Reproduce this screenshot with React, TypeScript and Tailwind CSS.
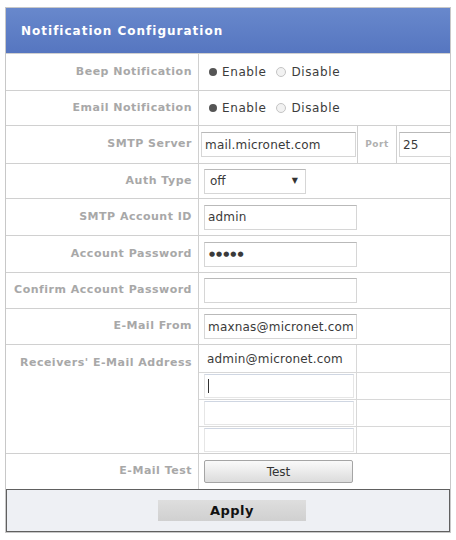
import type { ReactNode } from 'react'

const labelFont = { fontFamily: '"DejaVu Sans", Verdana, sans-serif' }

const labelCls =
  'flex items-center justify-end border-r border-[#d0d0d0] pr-[6px] text-[11px] font-bold tracking-[0.5px] text-[#a8a8a8]'

function Row({ label, h, children }: { label: string; h: string; children: ReactNode }) {
  return (
    <div className={`grid grid-cols-[193px_1fr] border-t border-[#d0d0d0] ${h}`}>
      <div className={labelCls}>{label}</div>
      <div className="flex items-center pl-[5px]">{children}</div>
    </div>
  )
}

function TextBox({ value, w = 'w-[153px]', pwd }: { value?: string; w?: string; pwd?: boolean }) {
  return (
    <div
      className={`flex h-[25px] ${w} items-center border border-[#d6d6d6] border-t-[#b9b9b9] bg-white px-[3px] text-[12px] tracking-[0.2px] text-[#3a3a3a]`}
    >
      {pwd ? <span className="pl-[1px] text-[7px] tracking-[1px]">●●●●●</span> : value}
    </div>
  )
}

function Radios() {
  return (
    <div className="flex items-center gap-[5px] pl-[5px] text-[12px] tracking-[0.6px] text-[#3c3c3c]">
      <span className="h-[8px] w-[8px] rounded-full bg-[#555]" />
      <span>Enable</span>
      <span className="ml-[5px] h-[10px] w-[10px] rounded-full border border-[#c4c4c4] bg-[#f2f2f2]" />
      <span>Disable</span>
    </div>
  )
}

export default function App() {
  const receivers = ['admin@micronet.com', '', '', '']
  return (
    <div className="min-h-[540px] w-[456px] bg-white pl-[5px] pt-[7px]" style={labelFont}>
      <div className="w-[446px] border border-[#c8c8c8] bg-white">
        {/* Header */}
        <div className="flex h-[45px] items-center bg-gradient-to-b from-[#6888cc] to-[#5676c0] pl-[15px] text-[12px] font-bold tracking-[1px] text-white">
          Notification Configuration
        </div>

        <Row label="Beep Notification" h="h-[37px]">
          <Radios />
        </Row>
        <Row label="Email Notification" h="h-[35px]">
          <Radios />
        </Row>

        {/* SMTP server + port */}
        <div className="grid h-[38px] grid-cols-[193px_1fr] border-t border-[#d0d0d0]">
          <div className={labelCls}>SMTP Server</div>
          <div className="grid grid-cols-[158px_40px_1fr]">
            <div className="flex items-center pl-[2px]">
              <TextBox value="mail.micronet.com" w="w-[155px]" />
            </div>
            <div className="flex items-center justify-center border-x border-[#d0d0d0] text-[9px] font-bold tracking-[0.5px] text-[#b0b0b0]">
              Port
            </div>
            <div className="flex items-center pl-[2px]">
              <TextBox value="25" w="w-[52px]" />
            </div>
          </div>
        </div>

        <Row label="Auth Type" h="h-[35px]">
          <div className="flex h-[25px] w-[102px] items-center justify-between border border-[#d6d6d6] border-t-[#b9b9b9] bg-white pl-[5px] pr-[7px] text-[12px] text-[#3a3a3a]">
            <span>off</span>
            <span className="text-[8px] text-[#333]">▼</span>
          </div>
        </Row>
        <Row label="SMTP Account ID" h="h-[37px]">
          <TextBox value="admin" />
        </Row>
        <Row label="Account Password" h="h-[37px]">
          <TextBox pwd />
        </Row>
        <Row label="Confirm Account Password" h="h-[36px]">
          <TextBox />
        </Row>
        <Row label="E-Mail From" h="h-[36px]">
          <TextBox value="maxnas@micronet.com" />
        </Row>

        {/* Receivers */}
        <div className="grid grid-cols-[193px_1fr] border-t border-[#d0d0d0]">
          <div className={`${labelCls} !items-start pt-[10px]`}>Receivers' E-Mail Address</div>
          <div className="flex flex-col">
            {receivers.map((r, i) => (
              <div
                key={i}
                className={`grid h-[27px] grid-cols-[158px_1fr] ${i > 0 ? 'border-t border-[#d8d8d8]' : ''}`}
              >
                <div className="flex items-center border-r border-[#d8d8d8] pl-[5px]">
                  <div
                    className={`flex h-[24px] w-[150px] items-center bg-white px-[3px] text-[12px] tracking-[0.2px] text-[#3a3a3a] ${
                      i > 0 ? 'border border-[#e6e6e6] border-t-[#cfd6e2]' : ''
                    }`}
                  >
                    {r}
                    {i === 1 && <span className="h-[14px] w-[1px] bg-[#333]" />}
                  </div>
                </div>
                <div />
              </div>
            ))}
          </div>
        </div>

        <Row label="E-Mail Test" h="h-[36px]">
          <button className="h-[23px] w-[149px] rounded-[2px] border border-[#a5a5a5] bg-gradient-to-b from-[#fafafa] to-[#dcdcdc] text-[12px] text-[#333]">
            Test
          </button>
        </Row>

        {/* Apply bar */}
        <div className="flex h-[43px] items-center border border-[#606060] bg-[#eef0f4] pl-[151px]">
          <button className="h-[21px] w-[148px] bg-gradient-to-b from-[#dedede] to-[#d0d0d0] text-[13px] font-bold tracking-[0.5px] text-[#111]">
            Apply
          </button>
        </div>
      </div>
    </div>
  )
}
